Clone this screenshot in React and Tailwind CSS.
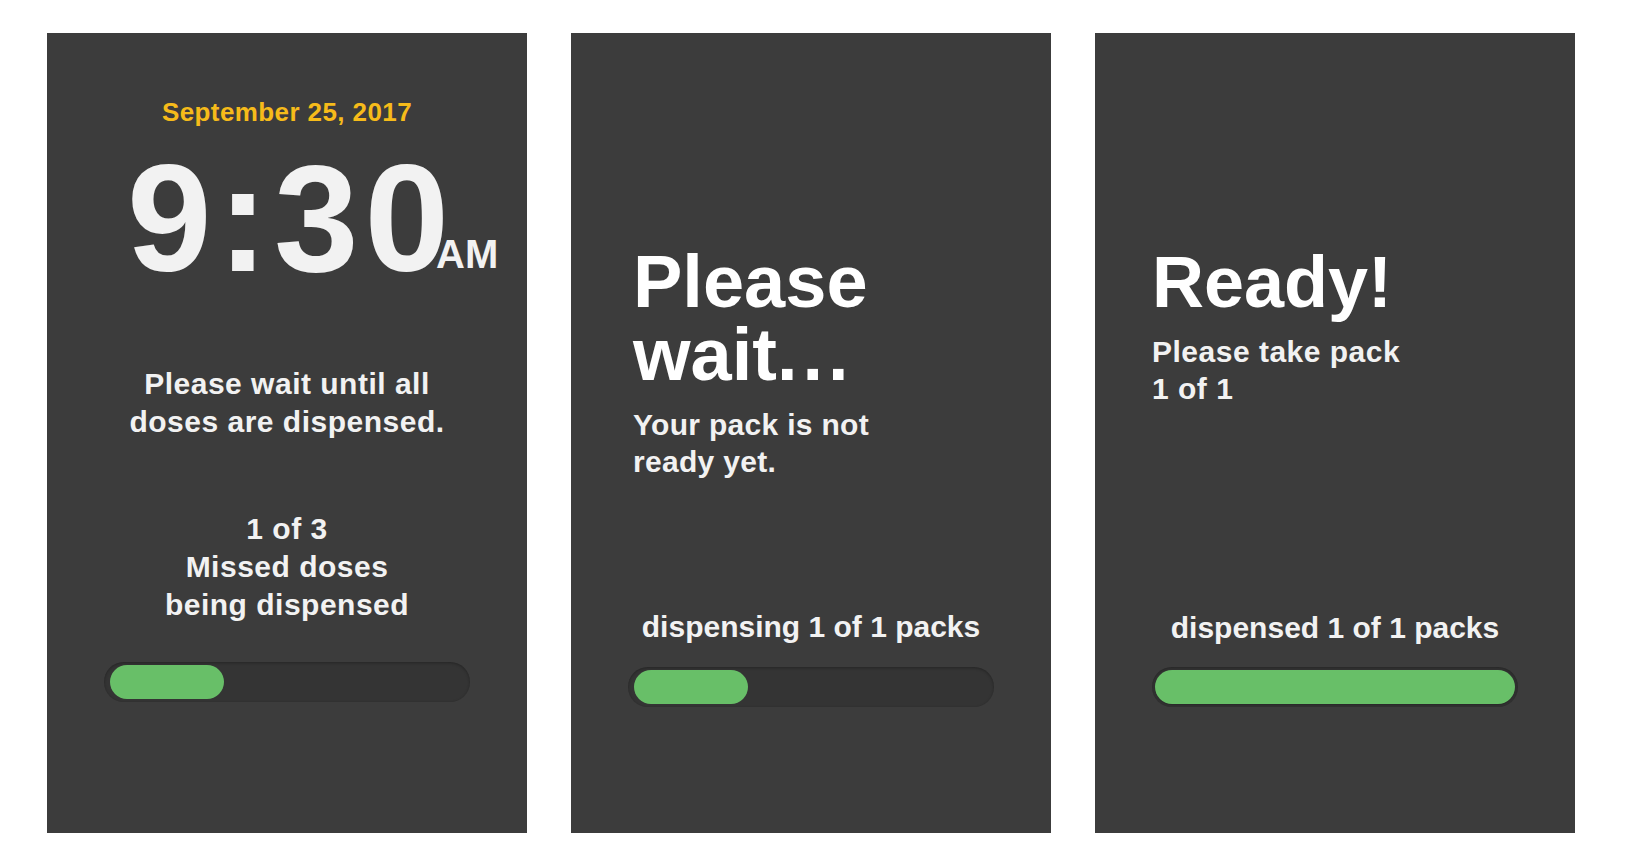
import React from "react";

function Track({ fill, narrow }) {
  return (
    <div className="mx-auto w-[366px] h-[40px] rounded-full bg-[#343434] p-[3px] shadow-[inset_0_1px_3px_rgba(0,0,0,0.3)]">
      {narrow ? (
        <div className="ml-[3px] h-full w-[114px] rounded-full bg-[#68bf68]" />
      ) : (
        <div className="h-full w-full rounded-full bg-[#68bf68] shadow-[0_1px_2px_rgba(0,0,0,0.25)]" />
      )}
    </div>
  );
}

export default function App() {
  const font = "font-['Liberation_Sans','Helvetica_Neue',Arial,sans-serif]";
  return (
    <div className={`w-full h-[865px] bg-white flex gap-[44px] pl-[47px] pt-[33px] ${font}`}>
      {/* Panel 1 */}
      <div className="w-[480px] h-[800px] bg-[#3c3c3c] flex flex-col items-center font-bold text-[#f2f2f2]">
        <div className="mt-[64px] text-[26px] leading-[30px] tracking-[0.4px] text-[#f6bb1a]">
          September 25, 2017
        </div>
        <div className="mt-[14px] ml-[8px] relative text-[152px] leading-[154px] tracking-[6px]">
          9:30
          <span className="absolute left-[calc(100%-19px)] bottom-[21px] text-[40px] leading-[40px] tracking-normal">
            AM
          </span>
        </div>
        <div className="mt-[70px] text-center text-[30px] leading-[38px] tracking-[0.5px]">
          Please wait until all
          <br />
          doses are dispensed.
        </div>
        <div className="mt-[69px] text-center text-[30px] leading-[38px] tracking-[0.5px]">
          1 of 3
          <br />
          Missed doses
          <br />
          being dispensed
        </div>
        <div className="mt-[38px]">
          <Track narrow />
        </div>
      </div>

      {/* Panel 2 */}
      <div className="w-[480px] h-[800px] bg-[#3c3c3c] flex flex-col font-bold text-[#f2f2f2]">
        <div className="pl-[62px] pt-[212px]">
          <div className="text-[74px] leading-[73px] text-white">
            Please
            <br />
            wait<span className="tracking-[5px]">...</span>
          </div>
          <div className="mt-[15px] text-[30px] leading-[37px] tracking-[0.3px]">
            Your pack is not
            <br />
            ready yet.
          </div>
        </div>
        <div className="mt-[128px] text-center text-[30px] leading-[37px]">
          dispensing 1 of 1 packs
        </div>
        <div className="mt-[22px]">
          <Track narrow />
        </div>
      </div>

      {/* Panel 3 */}
      <div className="w-[480px] h-[800px] bg-[#3c3c3c] flex flex-col font-bold text-[#f2f2f2]">
        <div className="pl-[57px] pt-[213px]">
          <div className="text-[72px] leading-[73px] text-white">Ready!</div>
          <div className="mt-[14px] text-[30px] leading-[37px] tracking-[0.5px]">
            Please take pack
            <br />
            1 of 1
          </div>
        </div>
        <div className="mt-[202px] text-center text-[30px] leading-[37px]">
          dispensed 1 of 1 packs
        </div>
        <div className="mt-[21px]">
          <Track />
        </div>
      </div>
    </div>
  );
}
